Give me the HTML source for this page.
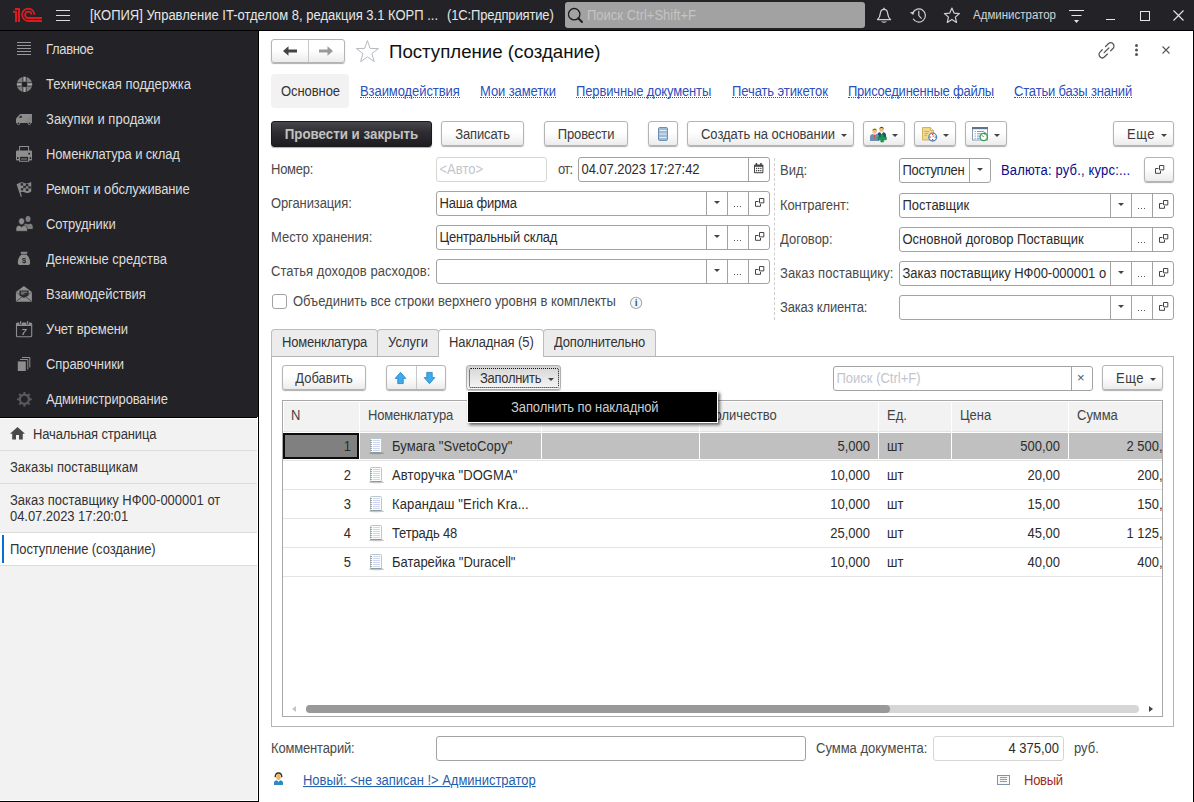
<!DOCTYPE html>
<html lang="ru"><head><meta charset="utf-8"><title>Поступление (создание)</title>
<style>
*{box-sizing:border-box;margin:0;padding:0}
html,body{width:1194px;height:802px;overflow:hidden;background:#fff}
body{font-family:"Liberation Sans",Arial,sans-serif;font-size:13px;color:#333;position:relative}
.a{position:absolute}
.t{position:absolute;transform:scaleY(1.07);transform-origin:0 12.5px;white-space:nowrap;line-height:16px;height:16px;margin-top:1px}
.dark{background:#232327}
.mi{position:absolute;transform:scaleY(1.07);transform-origin:0 12.5px;margin-top:1px;left:46px;color:#dcdcdc;white-space:nowrap;line-height:16px}
.btn{position:absolute;border:1px solid #b4b4b4;border-radius:3px;background:linear-gradient(#fff 0%,#fff 45%,#ececec 100%);box-shadow:0 1px 1px rgba(0,0,0,.32);color:#3c3c3c;text-align:center;white-space:nowrap}
.fld{position:absolute;border:1px solid #a2a2a2;border-radius:3px;background:#fff;height:25px}
.fld .v{position:absolute;transform:scaleY(1.07);transform-origin:0 12.5px;left:2.5px;top:4px;line-height:16px;white-space:nowrap;color:#2c2c2c}
.dv{position:absolute;top:0;bottom:0;width:1px;background:#a2a2a2}
.lbl{position:absolute;transform:scaleY(1.07);transform-origin:0 12.5px;margin-top:1px;white-space:nowrap;line-height:16px;color:#4a4a4a}
.lnk{position:absolute;margin-top:1px;white-space:nowrap;line-height:16px;color:#2b50be;border-bottom:1px dotted #2a58b4;height:14px}
.tri{position:absolute;width:0;height:0;border-left:3px solid transparent;border-right:3px solid transparent;border-top:3px solid #444}
.dots{position:absolute;font-size:11px;line-height:10px;color:#444;letter-spacing:1px}
.sep{position:absolute;left:0;width:257px;height:1px;background:#dcdcdc}
.hc{position:absolute;transform:scaleY(1.07);transform-origin:0 19.5px;top:0;height:30px;line-height:30px;padding-left:7px;color:#444;white-space:nowrap}
.vl{position:absolute;top:0;width:1px;background:#fff}
.rowt{position:absolute;transform:scaleY(1.07);transform-origin:0 12.5px;margin-top:1px;white-space:nowrap;line-height:16px;color:#2c2c2c}
.sy{display:inline-block;transform:scaleY(1.07);transform-origin:0 12.5px}
.sb{display:inline-block;transform:scaleY(1.07);transform-origin:0 17px}
</style></head><body>

<!-- ===== title bar ===== -->
<div class="a dark" style="left:0;top:0;width:1194px;height:30px"></div>
<div class="a" style="left:0;top:30px;width:1194px;height:1px;background:#000"></div>
<svg class="a" style="left:12px;top:6px" width="32" height="18" viewBox="12 6 32 18"><g fill="none" stroke="#dc1a21" stroke-width="2"><path d="M15 8.9 H19 V22"/><path d="M13 11.8 H16 V22"/><path d="M34.5 14.7 A6.2 6.2 0 1 0 28.3 21 H42" stroke-width="1.8"/><path d="M31.5 14.6 A3.2 3.2 0 1 0 28.3 18 H42" stroke-width="1.8"/></g></svg>
<div class="a" style="left:56px;top:10px;width:14px;height:1px;background:#dadada;box-shadow:0 5px 0 #dadada,0 10px 0 #dadada"></div>
<div class="t" style="left:90px;top:7px;color:#e6e6e6">[КОПИЯ] Управление IT-отделом 8, редакция 3.1 КОРП ...</div>
<div class="t" style="left:447px;top:7px;color:#e6e6e6;letter-spacing:-0.153px">(1С:Предприятие)</div>
<div class="a" style="left:565px;top:2px;width:300px;height:26px;background:#a2a2a2;border-radius:3px"></div>
<svg class="a" style="left:567px;top:7px" width="17" height="17" viewBox="0 0 17 17"><circle cx="7.2" cy="7.2" r="5.7" fill="none" stroke="#1e1e1e" stroke-width="1.3"/><path d="M11.3 11.3 L15 15" stroke="#1e1e1e" stroke-width="2" stroke-linecap="round"/></svg>
<div class="t" style="left:587px;top:7px;color:#c4c4c4">Поиск Ctrl+Shift+F</div>
<!-- bell -->
<svg class="a" style="left:874px;top:5px" width="20" height="20" viewBox="874 5 20 20"><path d="M877.4 19.6 Q879.9 17.6 880.4 13 Q880.9 9.3 884 9.3 Q887.1 9.3 887.6 13 Q888.1 17.6 890.6 19.6 Z" fill="none" stroke="#cfcfcf" stroke-width="1.2" stroke-linejoin="round"/><path d="M884 7.8 V9.4" stroke="#cfcfcf" stroke-width="1.4"/><path d="M880.8 21.4 H887.2 Q884 24 880.8 21.4Z" fill="#cfcfcf"/></svg>
<!-- history -->
<svg class="a" style="left:908px;top:5px" width="20" height="20" viewBox="908 5 20 20"><path d="M912.8 12.7 A6.6 6.6 0 1 1 913.1 18.8" fill="none" stroke="#cfcfcf" stroke-width="1.2"/><path d="M909.9 12.4 L914.4 11.4 L913.3 14.9 Z" fill="#cfcfcf"/><path d="M918.8 10.8 V15.6 L921.6 18.6" fill="none" stroke="#cfcfcf" stroke-width="1.2"/></svg>
<!-- star -->
<svg class="a" style="left:942px;top:5px" width="20" height="20" viewBox="942 5 20 20"><path d="M951.90 8.10 L954.02 13.09 L959.41 13.56 L955.32 17.11 L956.54 22.39 L951.90 19.60 L947.26 22.39 L948.48 17.11 L944.39 13.56 L949.78 13.09Z" fill="none" stroke="#cfcfcf" stroke-width="1.2" stroke-linejoin="round"/></svg>
<div class="t" style="left:973px;top:6px;color:#d4d4d4;font-size:11.5px">Администратор</div>
<svg class="a" style="left:1069px;top:9px" width="15" height="16" viewBox="0 0 15 16"><path d="M0 1.5 H15 M2.5 6.5 H12.5" stroke="#e6e6e6" stroke-width="1.2"/><path d="M5 11 H10 L7.5 14 Z" fill="#e6e6e6"/></svg>
<div class="a" style="left:1106px;top:19px;width:9px;height:1px;background:#e6e6e6"></div>
<div class="a" style="left:1140px;top:11px;width:10px;height:10px;border:1px solid #e6e6e6"></div>
<svg class="a" style="left:1173px;top:10px" width="11" height="11" viewBox="0 0 11 11"><path d="M0.5 0.5 L10.5 10.5 M10.5 0.5 L0.5 10.5" stroke="#e6e6e6" stroke-width="1.1"/></svg>

<!-- ===== sidebar dark ===== -->
<div class="a dark" style="left:0;top:31px;width:258px;height:386px"></div>
<div id="menu">
<div class="mi" style="top:41px;letter-spacing:-0.333px">Главное</div>
<div class="mi" style="top:76px">Техническая поддержка</div>
<div class="mi" style="top:111px;letter-spacing:0.047px">Закупки и продажи</div>
<div class="mi" style="top:146px;letter-spacing:-0.132px">Номенклатура и склад</div>
<div class="mi" style="top:181px;letter-spacing:-0.113px">Ремонт и обслуживание</div>
<div class="mi" style="top:216px;letter-spacing:-0.083px">Сотрудники</div>
<div class="mi" style="top:251px">Денежные средства</div>
<div class="mi" style="top:286px;letter-spacing:-0.077px">Взаимодействия</div>
<div class="mi" style="top:321px;letter-spacing:-0.114px">Учет времени</div>
<div class="mi" style="top:356px;letter-spacing:-0.075px">Справочники</div>
<div class="mi" style="top:391px;letter-spacing:-0.131px">Администрирование</div>
</div>
<!-- sidebar icons -->
<div class="a" style="left:17px;top:42px;width:14px;height:1px;background:#989898;box-shadow:0 3px 0 #989898,0 6px 0 #989898,0 9px 0 #989898,0 12px 0 #989898"></div>
<svg class="a" style="left:14px;top:74px" width="22" height="22" viewBox="14 74 22 22"><defs><clipPath id="ringc"><path d="M24.5 76.7 a7.7 7.7 0 1 0 0.01 0Z M24.5 81.5 a2.9 2.9 0 1 1 -0.01 0Z" clip-rule="evenodd"/></clipPath></defs><g clip-path="url(#ringc)"><rect x="16" y="76" width="17" height="17" fill="#7d7d7d"/><g fill="#232327"><rect x="22.5" y="76" width="4" height="17"/><rect x="16" y="82.4" width="17" height="4"/></g><g fill="#a8a8a8"><rect x="23.3" y="76" width="2.4" height="17"/><rect x="16" y="83.2" width="17" height="2.4"/></g></g></svg>
<svg class="a" style="left:14px;top:109px" width="22" height="22" viewBox="14 109 22 22"><path d="M20.4 113.9 H32 V122.9 H16 V119.3 Q16 118.6 16.5 118 L19.6 114.4 Q20 113.9 20.4 113.9Z" fill="#8c8c8c"/><path d="M23.5 122.9 L32 114.2 V122.9Z" fill="#848484"/><path d="M20.3 115.8 H21.9 V117.7 H18.7Z" fill="#2a2a2e"/><circle cx="18.5" cy="123.4" r="1.25" fill="#232327" stroke="#8c8c8c" stroke-width=".9"/><circle cx="29.3" cy="123.4" r="1.25" fill="#232327" stroke="#8c8c8c" stroke-width=".9"/></svg>
<svg class="a" style="left:14px;top:144px" width="22" height="22" viewBox="14 144 22 22"><rect x="19.6" y="146.5" width="9" height="5" fill="#232327" stroke="#8e8e8e" stroke-width="1"/><rect x="16" y="150.6" width="16" height="10" rx="1" fill="#8e8e8e"/><rect x="19.6" y="156.3" width="9" height="5" fill="#232327" stroke="#8e8e8e" stroke-width="1"/><path d="M21.1 159 H27.1" stroke="#8e8e8e" stroke-width="1"/><rect x="28.3" y="152.8" width="1.8" height="1.7" fill="#232327"/><rect x="17" y="157.2" width="1.6" height="1.8" fill="#232327"/><rect x="29.6" y="157.2" width="1.6" height="1.8" fill="#232327"/></svg>
<svg class="a" style="left:14px;top:179px" width="22" height="22" viewBox="14 179 22 22"><path d="M17.4 184 Q21 181.2 24.4 183 Q27.8 184.6 31.2 181.8 V191.4 Q27.8 194 24.4 192.2 Q22 191.2 20 192.6 Z" fill="#8a8a8a"/><path d="M17.2 184 L21.4 196.6" stroke="#8a8a8a" stroke-width="1.3" fill="none"/><g fill="#2a2a2e"><rect x="20.6" y="183.2" width="2.6" height="2.4"/><rect x="25.8" y="184" width="2.6" height="2.4"/><rect x="23.2" y="185.8" width="2.6" height="2.4"/><rect x="28.4" y="186.2" width="2.4" height="2.4"/><rect x="20.8" y="188.2" width="2.4" height="2.2"/><rect x="25.8" y="188.6" width="2.6" height="2.4"/></g></svg>
<svg class="a" style="left:14px;top:214px" width="22" height="22" viewBox="14 214 22 22"><g fill="#7e7e7e"><ellipse cx="28" cy="219" rx="2.5" ry="3"/><path d="M23.6 229 V226 Q23.6 224 26 223.4 L28 224.6 L30 223.4 Q32.7 224 32.7 226 V229 Z"/></g><g fill="#8e8e8e" stroke="#232327" stroke-width=".6"><ellipse cx="21.6" cy="221.3" rx="2.9" ry="3.4"/><path d="M16 231.3 V228.4 Q16 226 19 225.2 L21.6 226.8 L24.2 225.2 Q27.4 226 27.4 228.4 V231.3 Z"/></g></svg>
<svg class="a" style="left:14px;top:249px;will-change:transform" width="22" height="22" viewBox="14 249 22 22"><rect x="20.8" y="251.8" width="6.4" height="2" fill="#8e8e8e"/><path d="M21.4 254.6 H26.5 Q30.1 258 30.1 262.4 Q30.1 265 27.6 265 H20.3 Q17.8 265 17.8 262.4 Q17.8 258 21.4 254.6 Z" fill="#8e8e8e"/><text x="24" y="263" font-family="Liberation Sans,sans-serif" font-size="7.5" font-weight="bold" fill="#232327" text-anchor="middle">$</text></svg>
<svg class="a" style="left:14px;top:284px" width="22" height="22" viewBox="14 284 22 22"><path d="M15.9 292 L23.9 286 L31.9 292 V301.7 H15.9 Z" fill="#8e8e8e"/><path d="M19.4 290.4 H28.6 V295.4 L23.9 298 L19.4 295.4 Z" fill="#2c2c30"/><path d="M21 292.2 H27 M21 293.9 H24.5" stroke="#8e8e8e" stroke-width="1"/><path d="M16.3 301.3 L22 296.8 M31.5 301.3 L25.8 296.8" stroke="#2c2c30" stroke-width=".7"/><path d="M16.3 292.5 L19.4 294.4 M31.5 292.5 L28.6 294.4" stroke="#2c2c30" stroke-width=".5"/></svg>
<svg class="a" style="left:14px;top:319px;will-change:transform" width="22" height="22" viewBox="14 319 22 22"><rect x="16.5" y="323" width="15.2" height="13.7" rx="1" fill="none" stroke="#8e8e8e" stroke-width="1.1"/><rect x="16.5" y="323" width="15.2" height="3" fill="#8e8e8e"/><path d="M20.6 321 V324.4 M27.6 321 V324.4" stroke="#232327" stroke-width="2.4"/><path d="M20.6 321 V324 M27.6 321 V324" stroke="#8e8e8e" stroke-width="1.1"/><text x="24.1" y="335" font-family="Liberation Sans,sans-serif" font-size="9" font-weight="bold" font-style="italic" fill="#9a9a9a" text-anchor="middle">7</text></svg>
<svg class="a" style="left:14px;top:354px" width="22" height="22" viewBox="14 354 22 22"><path d="M22 357.5 H29.8 V367.5 M20 359.5 H27.8 V369.5" fill="none" stroke="#8e8e8e" stroke-width="1"/><rect x="17.8" y="361.4" width="8" height="9.6" fill="#8e8e8e"/></svg>
<svg class="a" style="left:14px;top:389px" width="22" height="22" viewBox="14 389 22 22"><g transform="translate(24.4 399.3)"><circle r="4.6" fill="none" stroke="#5a5a5a" stroke-width="2.2"/><g stroke="#5a5a5a" stroke-width="2"><path d="M0 -5 V-7.4"/><path d="M0 5 V7.4"/><path d="M-5 0 H-7.4"/><path d="M5 0 H7.4"/><path d="M3.54 3.54 L5.23 5.23"/><path d="M-3.54 3.54 L-5.23 5.23"/><path d="M3.54 -3.54 L5.23 -5.23"/><path d="M-3.54 -3.54 L-5.23 -5.23"/></g></g></svg>


<!-- ===== sidebar light (open windows) ===== -->
<div class="a" style="left:0;top:417px;width:258px;height:1px;background:#000"></div><div class="a" style="left:0;top:418px;width:257px;height:1px;background:#fff"></div><div class="a" style="left:0;top:419px;width:257px;height:382px;background:#f2f2f2"></div>
<div class="a" style="left:0;top:533px;width:257px;height:32px;background:#fff"></div>
<div class="a" style="left:2px;top:535px;width:2px;height:28px;background:#0a6ed1"></div>
<div class="sep" style="top:450px"></div>
<div class="sep" style="top:483px"></div>
<div class="sep" style="top:532px"></div>
<div class="sep" style="top:565px"></div>
<svg class="a" style="left:10px;top:427px" width="15" height="13" viewBox="0 0 15 13"><path d="M7.5 0 L0 6.8 H2.2 V12.4 H6 V8 H9 V12.4 H12.8 V6.8 H15 Z" fill="#4a4a4a"/></svg>
<div class="t" style="left:33px;top:426px;color:#333;letter-spacing:-0.135px">Начальная страница</div>
<div class="t" style="left:10px;top:459px;color:#333">Заказы поставщикам</div>
<div class="t" style="left:10px;top:492px;color:#333">Заказ поставщику НФ00-000001 от</div>
<div class="t" style="left:10px;top:508px;color:#333;letter-spacing:-0.056px">04.07.2023 17:20:01</div>
<div class="t" style="left:10px;top:541px;color:#333;letter-spacing:-0.081px">Поступление (создание)</div>
<div class="a" style="left:258px;top:31px;width:1px;height:771px;background:#000"></div>
<div class="a" style="left:257px;top:417px;width:1px;height:384px;background:#fff"></div>
<div class="a" style="left:0;top:800px;width:258px;height:1px;background:#fff"></div>
<div class="a" style="left:0;top:801px;width:259px;height:1px;background:#000"></div>
<div class="a" style="left:1193px;top:31px;width:1px;height:771px;background:#000"></div>

<!-- ===== form header ===== -->
<div class="btn" style="left:271px;top:39px;width:74px;height:24px"></div>
<div class="a" style="left:308px;top:40px;width:1px;height:22px;background:#c8c8c8"></div>
<svg class="a" style="left:283px;top:46px" width="14" height="10" viewBox="0 0 14 10"><path d="M0 5 L5.5 0.3 V3.6 H14 V6.4 H5.5 V9.7 Z" fill="#444"/></svg>
<svg class="a" style="left:319px;top:46px" width="14" height="10" viewBox="0 0 14 10"><path d="M14 5 L8.5 0.3 V3.6 H0 V6.4 H8.5 V9.7 Z" fill="#9a9a9a"/></svg>
<svg class="a" style="left:354px;top:38px" width="27" height="26" viewBox="354 38 27 26"><path d="M367.40 40.60 L370.16 48.40 L378.43 48.62 L371.87 53.65 L374.22 61.58 L367.40 56.90 L360.58 61.58 L362.93 53.65 L356.37 48.62 L364.64 48.40Z" fill="#fff" stroke="#b4b9c0" stroke-width="1"/></svg>
<div class="a" style="left:389px;top:40px;font-size:18.67px;line-height:24px;color:#111;white-space:nowrap">Поступление (создание)</div>
<!-- link / more / close -->
<svg class="a" style="left:1096px;top:40px" width="21" height="21" viewBox="1096 40 21 21"><g transform="translate(1106.5 50.3) rotate(-45)" fill="none" stroke="#555" stroke-width="1.25" stroke-linecap="round"><path d="M2 -3.3 H5.9 A3.3 3.3 0 0 1 5.9 3.3 H2.6"/><path d="M-2 3.3 H-5.9 A3.3 3.3 0 0 1 -5.9 -3.3 H-2.6"/><path d="M-3.3 0 H3.3"/></g></svg>
<div class="a" style="left:1135px;top:44px;width:3px;height:3px;border-radius:50%;background:#555;box-shadow:0 4.5px 0 #555,0 9px 0 #555"></div>
<svg class="a" style="left:1162px;top:46px" width="8" height="8" viewBox="0 0 8 8"><path d="M0.5 0.5 L7.5 7.5 M7.5 0.5 L0.5 7.5" stroke="#555" stroke-width="1.1"/></svg>

<!-- nav tabs -->
<div class="a" style="left:271px;top:74px;width:78px;height:34px;background:#f2f2f2;border-radius:4px"></div>
<div class="t" style="left:281px;top:83px;color:#333;letter-spacing:-0.071px">Основное</div>
<div class="lnk" style="left:360px;top:83px;letter-spacing:-0.077px"><span class="sy">Взаимодействия</span></div>
<div class="lnk" style="left:480px;top:83px;letter-spacing:-0.100px"><span class="sy">Мои заметки</span></div>
<div class="lnk" style="left:576px;top:83px;letter-spacing:-0.139px"><span class="sy">Первичные документы</span></div>
<div class="lnk" style="left:732px;top:83px;letter-spacing:-0.089px"><span class="sy">Печать этикеток</span></div>
<div class="lnk" style="left:848px;top:83px;letter-spacing:-0.232px"><span class="sy">Присоединенные файлы</span></div>
<div class="lnk" style="left:1014px;top:83px;letter-spacing:-0.165px"><span class="sy">Статьи базы знаний</span></div>

<!-- command bar -->
<div class="btn" style="left:271px;top:121px;width:161px;height:26px;background:linear-gradient(#48484c 0%,#2d2d31 45%,#1d1d21 100%);border-color:#19191c;color:#c2c2c2;font-weight:bold;font-size:13.33px;line-height:26px"><span class="sb">Провести и закрыть</span></div>
<div class="btn" style="left:441px;top:121px;width:83px;height:25px;line-height:25px;letter-spacing:-0.107px"><span class="sb">Записать</span></div>
<div class="btn" style="left:544px;top:121px;width:84px;height:25px;line-height:25px;letter-spacing:-0.107px"><span class="sb">Провести</span></div>
<div class="btn" style="left:648px;top:121px;width:30px;height:25px"></div>
<div class="btn" style="left:687px;top:121px;width:167px;height:25px;line-height:25px;text-align:left;padding-left:13px;letter-spacing:-0.039px"><span class="sb">Создать на основании</span></div>
<div class="tri" style="left:841px;top:134px"></div>
<div class="btn" style="left:863px;top:121px;width:42px;height:25px"></div><div class="tri" style="left:892px;top:134px"></div>
<div class="btn" style="left:914px;top:121px;width:42px;height:25px"></div><div class="tri" style="left:943px;top:134px"></div>
<div class="btn" style="left:965px;top:121px;width:42px;height:25px"></div><div class="tri" style="left:994px;top:134px"></div>
<div class="btn" style="left:1113px;top:121px;width:61px;height:25px;line-height:25px;text-align:left;padding-left:13px"><span class="sb" style="letter-spacing:.5px">Еще</span></div><div class="tri" style="left:1161px;top:134px"></div>
<svg class="a" style="left:656px;top:125px" width="14" height="18" viewBox="656 125 14 18"><rect x="658.5" y="127.5" width="9" height="13" rx="1.3" fill="#9dbbd6" stroke="#6d90b2"/><path d="M659.5 130.5 H666.5 M659.5 134 H666.5 M659.5 137.5 H666.5" stroke="#e3edf6" stroke-width="1.2"/></svg>
<svg class="a" style="left:868px;top:125px" width="20" height="18" viewBox="868 125 20 18"><ellipse cx="881.6" cy="129.3" rx="2.3" ry="2.7" fill="#f0c27a"/><path d="M879 128.6 Q881.6 125.4 884.2 128.6 Q881.6 127.4 879 128.6Z" fill="#3a2a20"/><path d="M877.2 139.4 V135 Q877.2 132.6 880 132.2 L881.6 134 L883.2 132.2 Q886 132.6 886 135 V139.4Z" fill="#2f4a6e"/><path d="M881 132.6 L881.6 138 L882.2 132.6Z" fill="#fff"/><ellipse cx="874.6" cy="131" rx="2.3" ry="2.7" fill="#f0c27a"/><path d="M872 130.3 Q874.6 127 877.2 130.3 Q874.6 129 872 130.3Z" fill="#7a4a20"/><path d="M870 141 V136.8 Q870 134.4 873 134 L874.6 135.8 L876.2 134 Q879.2 134.4 879.2 136.8 V141Z" fill="#6f8fb4"/><path d="M874 134.6 L874.6 140.6 L875.2 134.6Z" fill="#d04a3a"/><path d="M880.8 134.4 H883.6 V137 H886.4 V139.8 H883.6 V142 H880.8 V139.8 H878 V137 H880.8Z" fill="#13a04a" stroke="#0c7c38" stroke-width=".5"/></svg>
<svg class="a" style="left:920px;top:125px" width="20" height="18" viewBox="920 125 20 18"><path d="M922.5 127.5 H930.5 L933.5 130.5 V140 H922.5Z" fill="#f1d68c" stroke="#d4b25e"/><path d="M930.5 127.5 V130.5 H933.5" fill="#fbeec3" stroke="#d4b25e"/><path d="M924.5 131.5 H929 M924.5 133.5 H928 M924.5 135.5 H927" stroke="#c9a850" stroke-width=".8"/><circle cx="932.7" cy="137.1" r="3.9" fill="#fff" stroke="#4a86c8" stroke-width="1.3"/><g fill="#e0382c"><rect x="932.1" y="134" width="1.2" height="1.2"/><rect x="932.1" y="139" width="1.2" height="1.2"/><rect x="929.6" y="136.5" width="1.2" height="1.2"/><rect x="934.6" y="136.5" width="1.2" height="1.2"/></g><path d="M932.7 137.1 L934 135.4" stroke="#555" stroke-width=".7"/></svg>
<svg class="a" style="left:970px;top:125px" width="20" height="18" viewBox="970 125 20 18"><rect x="972.5" y="127.5" width="15" height="12.5" fill="#fff" stroke="#8e9aaa"/><rect x="972" y="127" width="16" height="2.2" fill="#5d7391"/><g stroke="#6d9be0" stroke-width="1"><path d="M974.6 131.5 H975.8 M977 131.5 H984"/><path d="M974.6 133.8 H975.8 M977 133.8 H983"/><path d="M974.6 136.1 H975.8 M977 136.1 H980"/><path d="M974.6 138.3 H975.8 M977 138.3 H979.5"/></g><circle cx="983.7" cy="137" r="3.6" fill="#fff" stroke="#3f9a55" stroke-width="1.3"/><path d="M983.7 137 L981.9 135.2" stroke="#555" stroke-width=".8"/><path d="M984.2 131.8 L986.8 133.2 L984.4 134.8Z" fill="#3f9a55"/></svg>

<!-- fields left -->
<div class="lbl" style="left:271px;top:161px;letter-spacing:-0.250px">Номер:</div>
<div class="fld" style="left:436px;top:157px;width:111px;border-color:#d6d6d6"><div class="v" style="color:#c4c4cc">&lt;Авто&gt;</div></div>
<div class="lbl" style="left:558px;top:161px;letter-spacing:-0.750px">от:</div>
<div class="fld" style="left:578px;top:157px;width:192px"><div class="v" style="letter-spacing:-0.069px">04.07.2023 17:27:42</div><div class="dv" style="left:169px"></div></div>
<div class="lbl" style="left:271px;top:195px;letter-spacing:-0.114px">Организация:</div>
<div class="fld" style="left:436px;top:191px;width:334px"><div class="v" style="letter-spacing:-0.194px">Наша фирма</div><div class="dv" style="left:269px"></div><div class="dv" style="left:290px"></div><div class="dv" style="left:311px"></div></div>
<div class="lbl" style="left:271px;top:229px;letter-spacing:-0.036px">Место хранения:</div>
<div class="fld" style="left:436px;top:225px;width:334px"><div class="v" style="letter-spacing:-0.188px">Центральный склад</div><div class="dv" style="left:269px"></div><div class="dv" style="left:290px"></div><div class="dv" style="left:311px"></div></div>
<div class="lbl" style="left:271px;top:263px;letter-spacing:0.043px">Статья доходов расходов:</div>
<div class="fld" style="left:436px;top:259px;width:334px"><div class="dv" style="left:269px"></div><div class="dv" style="left:290px"></div><div class="dv" style="left:311px"></div></div>
<div class="a" style="left:272px;top:294px;width:15px;height:15px;border:1px solid #a2a2a2;border-radius:3px;background:#fff"></div>
<div class="lbl" style="left:293px;top:293px;letter-spacing:-0.021px">Объединить все строки верхнего уровня в комплекты</div>
<div class="a" style="left:774px;top:158px;width:0;height:162px;border-left:1px dashed #cfcfcf"></div>

<!-- fields right -->
<div class="lbl" style="left:780px;top:162px">Вид:</div>
<div class="fld" style="left:899px;top:158px;width:92px"><div class="v" style="letter-spacing:-0.312px">Поступлен</div><div class="dv" style="left:69px"></div></div>
<div class="t" style="left:1001px;top:162px;color:#0a0a8c;letter-spacing:0.167px">Валюта: руб., курс:...</div>
<div class="btn" style="left:1144px;top:157px;width:30px;height:25px"></div>
<div class="lbl" style="left:780px;top:197px;letter-spacing:-0.150px">Контрагент:</div>
<div class="fld" style="left:899px;top:193px;width:275px"><div class="v" style="">Поставщик</div><div class="dv" style="left:210px"></div><div class="dv" style="left:231px"></div><div class="dv" style="left:252px"></div></div>
<div class="lbl" style="left:780px;top:231px">Договор:</div>
<div class="fld" style="left:899px;top:227px;width:275px"><div class="v" style="">Основной договор Поставщик</div><div class="dv" style="left:231px"></div><div class="dv" style="left:252px"></div></div>
<div class="lbl" style="left:780px;top:265px;letter-spacing:0.062px">Заказ поставщику:</div>
<div class="fld" style="left:899px;top:261px;width:275px"><div class="v" style="letter-spacing:-0.034px">Заказ поставщику НФ00-000001 о</div><div class="dv" style="left:210px"></div><div class="dv" style="left:231px"></div><div class="dv" style="left:252px"></div></div>
<div class="lbl" style="left:780px;top:299px;letter-spacing:-0.154px">Заказ клиента:</div>
<div class="fld" style="left:899px;top:295px;width:275px"><div class="dv" style="left:210px"></div><div class="dv" style="left:231px"></div><div class="dv" style="left:252px"></div></div>
<div class="tri" style="left:714px;top:201px"></div>
<div class="a" style="left:734px;top:206px;width:1px;height:1px;background:#555;box-shadow:3px 0 0 #555,6px 0 0 #555"></div>
<svg class="a" style="left:755px;top:198px" width="10" height="9" viewBox="0 0 10 9"><path d="M4.5 0.5 H8.8 V4.9 H4.5Z M3.5 3.5 H0.5 V8.3 H5.5 V6" fill="none" stroke="#444" stroke-width="1"/></svg>
<div class="tri" style="left:714px;top:235px"></div>
<div class="a" style="left:734px;top:240px;width:1px;height:1px;background:#555;box-shadow:3px 0 0 #555,6px 0 0 #555"></div>
<svg class="a" style="left:755px;top:232px" width="10" height="9" viewBox="0 0 10 9"><path d="M4.5 0.5 H8.8 V4.9 H4.5Z M3.5 3.5 H0.5 V8.3 H5.5 V6" fill="none" stroke="#444" stroke-width="1"/></svg>
<div class="tri" style="left:714px;top:269px"></div>
<div class="a" style="left:734px;top:274px;width:1px;height:1px;background:#555;box-shadow:3px 0 0 #555,6px 0 0 #555"></div>
<svg class="a" style="left:755px;top:266px" width="10" height="9" viewBox="0 0 10 9"><path d="M4.5 0.5 H8.8 V4.9 H4.5Z M3.5 3.5 H0.5 V8.3 H5.5 V6" fill="none" stroke="#444" stroke-width="1"/></svg>
<svg class="a" style="left:754px;top:163px" width="10" height="11" viewBox="0 0 10 11"><rect x="0" y="1.4" width="9.4" height="8.8" rx="1" fill="#444"/><rect x="1.7" y="0" width="1.5" height="2.4" fill="#444"/><rect x="6.2" y="0" width="1.5" height="2.4" fill="#444"/><rect x="1" y="3.8" width="7.4" height="5.4" fill="#fff"/><g fill="#444"><rect x="1.9" y="4.8" width="1.3" height="1.3"/><rect x="4.05" y="4.8" width="1.3" height="1.3"/><rect x="6.2" y="4.8" width="1.3" height="1.3"/><rect x="1.9" y="7" width="1.3" height="1.3"/><rect x="4.05" y="7" width="1.3" height="1.3"/><rect x="6.2" y="7" width="1.3" height="1.3"/></g></svg>
<div class="tri" style="left:1118px;top:203px"></div>
<div class="a" style="left:1138px;top:208px;width:1px;height:1px;background:#555;box-shadow:3px 0 0 #555,6px 0 0 #555"></div>
<svg class="a" style="left:1159px;top:200px" width="10" height="9" viewBox="0 0 10 9"><path d="M4.5 0.5 H8.8 V4.9 H4.5Z M3.5 3.5 H0.5 V8.3 H5.5 V6" fill="none" stroke="#444" stroke-width="1"/></svg>
<div class="a" style="left:1138px;top:242px;width:1px;height:1px;background:#555;box-shadow:3px 0 0 #555,6px 0 0 #555"></div>
<svg class="a" style="left:1159px;top:234px" width="10" height="9" viewBox="0 0 10 9"><path d="M4.5 0.5 H8.8 V4.9 H4.5Z M3.5 3.5 H0.5 V8.3 H5.5 V6" fill="none" stroke="#444" stroke-width="1"/></svg>
<div class="tri" style="left:1118px;top:271px"></div>
<div class="a" style="left:1138px;top:276px;width:1px;height:1px;background:#555;box-shadow:3px 0 0 #555,6px 0 0 #555"></div>
<svg class="a" style="left:1159px;top:268px" width="10" height="9" viewBox="0 0 10 9"><path d="M4.5 0.5 H8.8 V4.9 H4.5Z M3.5 3.5 H0.5 V8.3 H5.5 V6" fill="none" stroke="#444" stroke-width="1"/></svg>
<div class="tri" style="left:1118px;top:305px"></div>
<div class="a" style="left:1138px;top:310px;width:1px;height:1px;background:#555;box-shadow:3px 0 0 #555,6px 0 0 #555"></div>
<svg class="a" style="left:1159px;top:302px" width="10" height="9" viewBox="0 0 10 9"><path d="M4.5 0.5 H8.8 V4.9 H4.5Z M3.5 3.5 H0.5 V8.3 H5.5 V6" fill="none" stroke="#444" stroke-width="1"/></svg>
<div class="tri" style="left:977px;top:168px"></div>
<svg class="a" style="left:1155px;top:165px" width="10" height="9" viewBox="0 0 10 9"><path d="M4.5 0.5 H8.8 V4.9 H4.5Z M3.5 3.5 H0.5 V8.3 H5.5 V6" fill="none" stroke="#444" stroke-width="1"/></svg>
<svg class="a" style="left:629px;top:296px" width="14" height="14" viewBox="629 296 14 14"><circle cx="636.1" cy="302.9" r="5.6" fill="#f6f6f6" stroke="#a9a9a9" stroke-width="1.1"/><text x="636.1" y="306.4" font-family="Liberation Serif,serif" font-weight="bold" font-size="10" fill="#1c62ad" text-anchor="middle">i</text></svg>

<!-- pages -->
<div class="a" style="left:271px;top:356px;width:903px;height:371px;border:1px solid #b4b4b4;background:#fff"></div>
<div class="a" style="left:271px;top:329px;width:107px;height:28px;border:1px solid #bcbcbc;border-bottom-color:#b4b4b4;border-radius:4px 4px 0 0;background:#ececec"></div>
<div class="a" style="left:377px;top:329px;width:62px;height:28px;border:1px solid #bcbcbc;border-bottom-color:#b4b4b4;border-radius:4px 4px 0 0;background:#ececec"></div>
<div class="a" style="left:543px;top:329px;width:113px;height:28px;border:1px solid #bcbcbc;border-bottom-color:#b4b4b4;border-radius:4px 4px 0 0;background:#ececec"></div>
<div class="a" style="left:438px;top:329px;width:106px;height:28px;border:1px solid #bcbcbc;border-bottom:none;border-radius:4px 4px 0 0;background:#fff"></div>
<div class="t" style="left:282px;top:334px;color:#333;letter-spacing:-0.182px">Номенклатура</div>
<div class="t" style="left:388px;top:334px;color:#333">Услуги</div>
<div class="t" style="left:449px;top:334px;color:#333;letter-spacing:-0.083px">Накладная (5)</div>
<div class="t" style="left:554px;top:334px;color:#333;letter-spacing:-0.192px">Дополнительно</div>

<!-- table toolbar -->
<div class="btn" style="left:282px;top:365px;width:84px;height:25px;line-height:25px"><span class="sb">Добавить</span></div>
<div class="btn" style="left:386px;top:365px;width:60px;height:25px"></div>
<div class="a" style="left:416px;top:366px;width:1px;height:23px;background:#c8c8c8"></div>
<div class="a" style="left:466px;top:365px;width:95px;height:25px;border:1px solid #b0b0b0;border-radius:3px;background:linear-gradient(#d4d4d4 0%,#e6e6e6 50%,#f6f6f6 100%);box-shadow:0 1px 1px rgba(0,0,0,.25)"></div><div class="a" style="left:469px;top:368px;width:90px;height:20px;border:1px dotted #111;border-radius:2px"></div>
<div class="t" style="left:480px;top:370px;color:#333;letter-spacing:-0.287px">Заполнить</div><div class="tri" style="left:548px;top:378px"></div>
<div class="fld" style="left:833px;top:366px;width:260px;height:25px;border-color:#a2a2a2"><div class="v" style="color:#c4c4cc">Поиск (Ctrl+F)</div><div class="dv" style="left:237px;background:#a2a2a2"></div><div class="a" style="left:243px;top:3px;line-height:16px;color:#555;font-size:13px">×</div></div>
<div class="btn" style="left:1102px;top:365px;width:61px;height:25px;line-height:25px;text-align:left;padding-left:13px"><span class="sb" style="letter-spacing:.5px">Еще</span></div><div class="tri" style="left:1150px;top:378px"></div>
<svg class="a" style="left:394px;top:371px" width="13" height="14" viewBox="394 371 13 14"><path d="M400.5 372.3 L405.8 378.4 H403.2 V383.6 H397.8 V378.4 H395.2Z" fill="#41aaea" stroke="#2a88c8" stroke-width=".9" stroke-linejoin="round"/></svg>
<svg class="a" style="left:423px;top:371px" width="13" height="14" viewBox="423 371 13 14"><path d="M429.5 383.7 L434.8 377.6 H432.2 V372.4 H426.8 V377.6 H424.2Z" fill="#41aaea" stroke="#2a88c8" stroke-width=".9" stroke-linejoin="round"/></svg>

<!-- table -->
<div class="a" id="tbl" style="left:282px;top:400px;width:881px;height:317px;border:1px solid #a8a8a8;background:#fff;overflow:hidden">
 <div class="a" style="left:1px;top:1px;width:878px;height:29px;background:#f2f2f2"></div><div class="a" style="left:0;top:30px;width:879px;height:1px;background:#e2e2e2"></div>
 <div class="hc" style="left:1px">N</div>
 <div class="hc" style="left:78px;letter-spacing:-0.182px">Номенклатура</div>
 <div class="hc" style="left:417px">Количество</div>
 <div class="hc" style="left:597px">Ед.</div>
 <div class="hc" style="left:670px">Цена</div>
 <div class="hc" style="left:787px">Сумма</div>
 <!-- selected row -->
 <div class="a" style="left:0;top:32px;width:879px;height:26px;background:#c0c0c0"></div>
 <div class="a" style="left:0;top:32px;width:76px;height:26px;background:#808080;border:2px solid #0c0c0c"></div>
 <!-- row separators -->
 <div class="a" style="left:0;top:59px;width:879px;height:1px;background:#e4e4e4"></div>
 <div class="a" style="left:0;top:88px;width:879px;height:1px;background:#e4e4e4"></div>
 <div class="a" style="left:0;top:117px;width:879px;height:1px;background:#e4e4e4"></div>
 <div class="a" style="left:0;top:146px;width:879px;height:1px;background:#e4e4e4"></div>
 <div class="a" style="left:0;top:175px;width:879px;height:1px;background:#e4e4e4"></div>
 <!-- column separators (header+selected row) -->
 <div class="vl" style="left:76px;height:59px"></div>
 <div class="vl" style="left:258px;height:59px"></div>
 <div class="vl" style="left:416px;height:59px"></div>
 <div class="vl" style="left:595px;height:59px"></div>
 <div class="vl" style="left:668px;height:59px"></div>
 <div class="vl" style="left:785px;height:59px"></div>
 <div class="rowt" style="right:811px;top:37px">1</div>
 <svg class="a" style="left:85px;top:37px" width="17" height="17" viewBox="0 0 17 17"><ellipse cx="8.6" cy="15.2" rx="7.6" ry="1" fill="#000" opacity=".22"/><rect x="2.5" y="0.5" width="11" height="14" rx="0.8" fill="#fbfdfd" stroke="#b9c8c8"/><path d="M2.5 14.5 H13.5" stroke="#8c9c9c"/><path d="M5 2.5H12M5 4.5H12M5 6.5H12M5 8.5H12M5 10.5H12M5 12.5H12" stroke="#d0d5f1" stroke-width="1"/><path d="M2.1 2.5H4M2.1 4.5H4M2.1 6.5H4M2.1 8.5H4M2.1 10.5H4M2.1 12.5H4" stroke="#93a3a3" stroke-width=".9"/></svg>
 <div class="rowt" style="left:109px;top:37px;letter-spacing:0.088px">Бумага &quot;SvetoCopy&quot;</div>
 <div class="rowt" style="right:292px;top:37px">5,000</div>
 <div class="rowt" style="left:604px;top:37px">шт</div>
 <div class="rowt" style="right:102px;top:37px">500,00</div>
 <div class="rowt" style="right:-15px;top:37px">2 500,00</div>
 <div class="rowt" style="right:811px;top:66px">2</div>
 <svg class="a" style="left:85px;top:66px" width="17" height="17" viewBox="0 0 17 17"><ellipse cx="8.6" cy="15.2" rx="7.6" ry="1" fill="#000" opacity=".22"/><rect x="2.5" y="0.5" width="11" height="14" rx="0.8" fill="#fbfdfd" stroke="#b9c8c8"/><path d="M2.5 14.5 H13.5" stroke="#8c9c9c"/><path d="M5 2.5H12M5 4.5H12M5 6.5H12M5 8.5H12M5 10.5H12M5 12.5H12" stroke="#d0d5f1" stroke-width="1"/><path d="M2.1 2.5H4M2.1 4.5H4M2.1 6.5H4M2.1 8.5H4M2.1 10.5H4M2.1 12.5H4" stroke="#93a3a3" stroke-width=".9"/></svg>
 <div class="rowt" style="left:109px;top:66px;letter-spacing:0.094px">Авторучка &quot;DOGMA&quot;</div>
 <div class="rowt" style="right:292px;top:66px">10,000</div>
 <div class="rowt" style="left:604px;top:66px">шт</div>
 <div class="rowt" style="right:102px;top:66px">20,00</div>
 <div class="rowt" style="right:-15px;top:66px">200,00</div>
 <div class="rowt" style="right:811px;top:95px">3</div>
 <svg class="a" style="left:85px;top:95px" width="17" height="17" viewBox="0 0 17 17"><ellipse cx="8.6" cy="15.2" rx="7.6" ry="1" fill="#000" opacity=".22"/><rect x="2.5" y="0.5" width="11" height="14" rx="0.8" fill="#fbfdfd" stroke="#b9c8c8"/><path d="M2.5 14.5 H13.5" stroke="#8c9c9c"/><path d="M5 2.5H12M5 4.5H12M5 6.5H12M5 8.5H12M5 10.5H12M5 12.5H12" stroke="#d0d5f1" stroke-width="1"/><path d="M2.1 2.5H4M2.1 4.5H4M2.1 6.5H4M2.1 8.5H4M2.1 10.5H4M2.1 12.5H4" stroke="#93a3a3" stroke-width=".9"/></svg>
 <div class="rowt" style="left:109px;top:95px;letter-spacing:0.119px">Карандаш &quot;Erich Kra...</div>
 <div class="rowt" style="right:292px;top:95px">10,000</div>
 <div class="rowt" style="left:604px;top:95px">шт</div>
 <div class="rowt" style="right:102px;top:95px">15,00</div>
 <div class="rowt" style="right:-15px;top:95px">150,00</div>
 <div class="rowt" style="right:811px;top:124px">4</div>
 <svg class="a" style="left:85px;top:124px" width="17" height="17" viewBox="0 0 17 17"><ellipse cx="8.6" cy="15.2" rx="7.6" ry="1" fill="#000" opacity=".22"/><rect x="2.5" y="0.5" width="11" height="14" rx="0.8" fill="#fbfdfd" stroke="#b9c8c8"/><path d="M2.5 14.5 H13.5" stroke="#8c9c9c"/><path d="M5 2.5H12M5 4.5H12M5 6.5H12M5 8.5H12M5 10.5H12M5 12.5H12" stroke="#d0d5f1" stroke-width="1"/><path d="M2.1 2.5H4M2.1 4.5H4M2.1 6.5H4M2.1 8.5H4M2.1 10.5H4M2.1 12.5H4" stroke="#93a3a3" stroke-width=".9"/></svg>
 <div class="rowt" style="left:109px;top:124px;letter-spacing:-0.167px">Тетрадь 48</div>
 <div class="rowt" style="right:292px;top:124px">25,000</div>
 <div class="rowt" style="left:604px;top:124px">шт</div>
 <div class="rowt" style="right:102px;top:124px">45,00</div>
 <div class="rowt" style="right:-15px;top:124px">1 125,00</div>
 <div class="rowt" style="right:811px;top:153px">5</div>
 <svg class="a" style="left:85px;top:153px" width="17" height="17" viewBox="0 0 17 17"><ellipse cx="8.6" cy="15.2" rx="7.6" ry="1" fill="#000" opacity=".22"/><rect x="2.5" y="0.5" width="11" height="14" rx="0.8" fill="#fbfdfd" stroke="#b9c8c8"/><path d="M2.5 14.5 H13.5" stroke="#8c9c9c"/><path d="M5 2.5H12M5 4.5H12M5 6.5H12M5 8.5H12M5 10.5H12M5 12.5H12" stroke="#d0d5f1" stroke-width="1"/><path d="M2.1 2.5H4M2.1 4.5H4M2.1 6.5H4M2.1 8.5H4M2.1 10.5H4M2.1 12.5H4" stroke="#93a3a3" stroke-width=".9"/></svg>
 <div class="rowt" style="left:109px;top:153px;letter-spacing:-0.026px">Батарейка &quot;Duracell&quot;</div>
 <div class="rowt" style="right:292px;top:153px">10,000</div>
 <div class="rowt" style="left:604px;top:153px">шт</div>
 <div class="rowt" style="right:102px;top:153px">40,00</div>
 <div class="rowt" style="right:-15px;top:153px">400,00</div>
 <!-- scrollbar -->
 <div class="a" style="left:23px;top:304px;width:833px;height:8px;border-radius:4px;background:#d6d6d6"></div>
 <div class="a" style="left:23px;top:304px;width:584px;height:8px;border-radius:4px;background:#999"></div>
 <div class="a" style="left:9px;top:305px;width:0;height:0;border-top:3px solid transparent;border-bottom:3px solid transparent;border-right:4px solid #c4c4c4"></div>
 <div class="a" style="left:866px;top:305px;width:0;height:0;border-top:3px solid transparent;border-bottom:3px solid transparent;border-left:4px solid #444"></div>
</div>

<!-- dropdown -->
<div class="a" style="left:467px;top:391px;width:251px;height:32px;background:#000;border:1px solid #fff;box-shadow:2px 2px 3px rgba(0,0,0,.6)"></div>
<div class="t" style="left:511px;top:399px;color:#cdcdcd;letter-spacing:-0.095px">Заполнить по накладной</div>

<!-- footer -->
<div class="lbl" style="left:271px;top:740px;letter-spacing:-0.164px">Комментарий:</div>
<div class="fld" style="left:436px;top:736px;width:370px"></div>
<div class="lbl" style="left:816px;top:740px">Сумма документа:</div>
<div class="fld" style="left:933px;top:736px;width:131px;border-color:#d6d6d6"><div class="v" style="left:auto;right:4px">4 375,00</div></div>
<div class="lbl" style="left:1074px;top:740px">руб.</div>
<div class="t" style="left:303px;top:772px;color:#1f5fae;text-decoration:underline;letter-spacing:-0.026px">Новый: &lt;не записан !&gt; Администратор</div>
<div class="t" style="left:1024px;top:772px;color:#9e2a1f;letter-spacing:-0.250px">Новый</div>
<svg class="a" style="left:273px;top:772px" width="12" height="14" viewBox="273 772 12 14"><path d="M275.2 777.2 Q275.2 773 278.5 773 Q281.8 773 281.8 777.2" fill="none" stroke="#3a2c1e" stroke-width="1.3"/><ellipse cx="278.5" cy="777" rx="2.3" ry="2.9" fill="#eeb85e"/><path d="M274 785 V782.6 Q274 780.6 276.6 780.2 L278.5 781.4 L280.4 780.2 Q283 780.6 283 782.6 V785Z" fill="#2f8ac0"/><path d="M277.9 780.4 L278.5 782.6 L279.1 780.4Z" fill="#fff"/></svg>
<svg class="a" style="left:997px;top:774px" width="14" height="12" viewBox="997 774 14 12"><rect x="997.5" y="775.5" width="12" height="9" fill="#f6f6f6" stroke="#8194ae"/><path d="M1000 777.5 H1007 M1000 779.5 H1007 M1000 781.5 H1007" stroke="#8b9cb2" stroke-width="1"/></svg>

</body></html>
